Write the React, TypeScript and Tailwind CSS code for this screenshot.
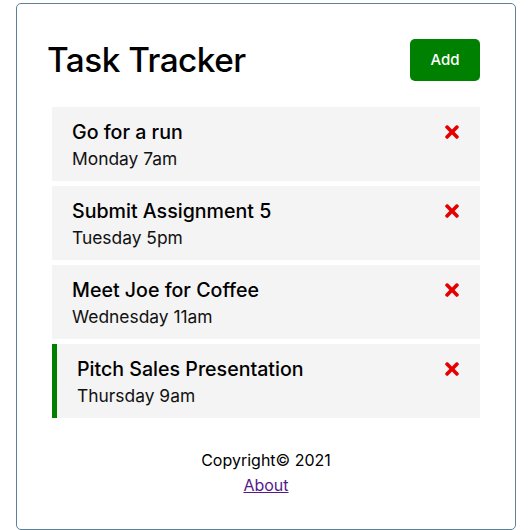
import { FaTimes } from "react-icons/fa";

const tasks = [
  { id: 1, text: "Go for a run", day: "Monday 7am", reminder: false },
  { id: 2, text: "Submit Assignment 5", day: "Tuesday 5pm", reminder: false },
  { id: 3, text: "Meet Joe for Coffee", day: "Wednesday 11am", reminder: false },
  { id: 4, text: "Pitch Sales Presentation", day: "Thursday 9am", reminder: true },
];

function Task({ text, day, reminder }: { text: string; day: string; reminder: boolean }) {
  return (
    <div
      className={
        "h-[74px] bg-[#f4f4f4] pt-[10px] pr-5 cursor-pointer " +
        (reminder ? "border-l-[5px] border-[#008000] pl-5" : "pl-5")
      }
    >
      <h3 className="flex items-center justify-between text-[19.6px] font-medium leading-[30px] text-black">
        {text}
        <FaTimes className="mr-[-2px] text-[20px] text-[#e60000]" />
      </h3>
      <p className="text-[17.4px] leading-[24px] text-[#111]">{day}</p>
    </div>
  );
}

export default function App() {
  return (
    <div className="min-h-[530px] bg-white pt-[3px] font-['Inter',sans-serif]">
      <div className="ml-4 w-[500px] rounded-[5px] border border-[#5b819b] px-[30px] pt-[30px] pb-[31px]">
        <header className="mb-[21px] flex h-[52px] items-center justify-between">
          <h1 className="pt-[2px] text-[33.3px] font-medium tracking-[-0.5px] text-black">Task Tracker</h1>
          <button className="mr-[5px] h-[42px] w-[70px] rounded-[5px] bg-[#008000] text-[15px] font-medium text-white">
            Add
          </button>
        </header>
        <div className="mx-[5px] flex flex-col gap-[5px]">
          {tasks.map((t) => (
            <Task key={t.id} {...t} />
          ))}
        </div>
        <footer className="mt-[30px] text-center text-[16px] leading-[25px] text-black">
          <p>Copyright&copy; 2021</p>
          <a href="#" className="text-[#551a8b] underline">
            About
          </a>
        </footer>
      </div>
    </div>
  );
}
